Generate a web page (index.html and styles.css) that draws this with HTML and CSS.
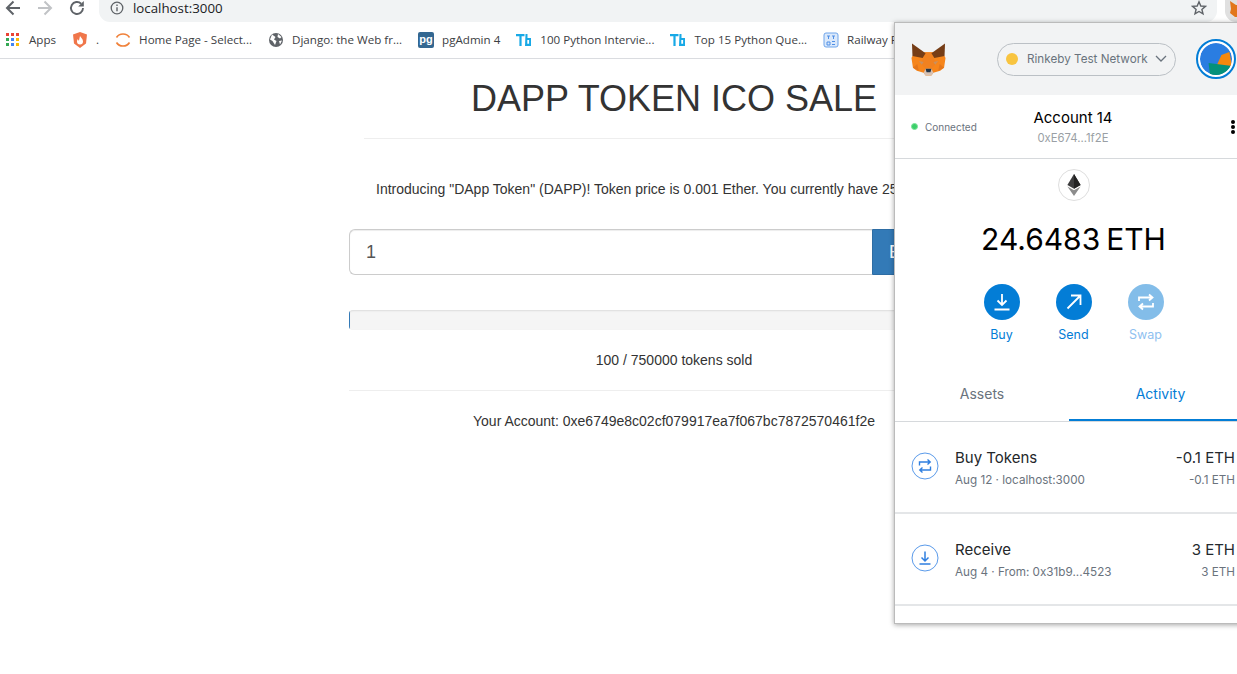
FILE: index.html
```html
<!DOCTYPE html>
<html>
<head>
    <title>DApp Token ICO</title>
    <link rel="stylesheet" href="styles.css">
</head>
<body>
    <div class="toolbar">
        <svg class="nav-icon" viewBox="0 0 16 16"><path d="M15 8H2.500M8.500 1.500 2 8l6.500 6.500" fill="none" stroke="#5f6368" stroke-width="2"/></svg>
        <svg class="nav-icon" viewBox="0 0 16 16"><path d="M1 8h12.500M7.500 1.500 14 8l-6.500 6.500" fill="none" stroke="#c1c3c6" stroke-width="2"/></svg>
        <svg class="nav-icon" viewBox="0 0 16 16"><path d="M14 8a6 6 0 1 1-1.800-4.300" fill="none" stroke="#5f6368" stroke-width="1.900"/><path d="M14.800 1v5.600H9.200z" fill="#5f6368"/></svg>
        <div class="address">
            <svg class="info-icon" viewBox="0 0 14 14"><circle cx="7" cy="7" r="5.800" fill="none" stroke="#5f6368" stroke-width="1.300"/><path d="M6.300 6.200h1.400v4H6.300zM6.300 3.600h1.400V5H6.300z" fill="#5f6368"/></svg>
            <span class="url">localhost:3000</span>
            <svg class="star-icon" viewBox="0 0 16 16"><path d="M8 1.800 9.800 6l4.600.400-3.500 3 1.100 4.500L8 11.500l-4 2.400 1.100-4.500-3.500-3L6.200 6z" fill="none" stroke="#5f6368" stroke-width="1.400"/></svg>
        </div>
        <div class="ext-btn">
            <svg viewBox="0 0 20 20"><path d="M2 1l6 4h4l6-4-1 8 1 4-5 4H7l-5-4 1-4z" fill="#e2761b"/></svg>
        </div>
    </div>

    <div class="bookmarks">
        <a class="bm bm-apps">
            <svg class="bm-icon grid-icon" viewBox="0 0 13 13">
                <path fill="#ea4335" d="M0 0h3v3H0zM5 0h3v3H5zM10 0h3v3h-3z"/>
                <path fill="#4285f4" d="M5 5h3v3H5z"/><path fill="#34a853" d="M0 5h3v3H0zM0 10h3v3H0z"/>
                <path fill="#fbbc05" d="M10 5h3v3h-3zM10 10h3v3h-3z"/><path fill="#4285f4" d="M5 10h3v3H5z"/>
            </svg>
            Apps
        </a>
        <a class="bm">
            <svg class="bm-icon" viewBox="0 0 16 16"><path d="M8 0l7 2.400-1 9L8 16l-6-4.600-1-9z" fill="#f0764a"/><path d="M8 4c1 2 3 3 3 5.500a3 3 0 0 1-6 0c0-1 .5-2 1-2.500 0 1 .5 1.500 1 1.500C7.500 7 7.500 5.500 8 4z" fill="#fff"/></svg>
            .
        </a>
        <a class="bm">
            <svg class="bm-icon" viewBox="0 0 16 16"><path d="M1.500 5.500C3 3 5.200 2 8 2s5 1 6.500 3.500" fill="none" stroke="#f0813a" stroke-width="1.600"/><path d="M1.500 10.500C3 13 5.200 14 8 14s5-1 6.500-3.500" fill="none" stroke="#f0813a" stroke-width="1.600"/></svg>
            Home Page - Select...
        </a>
        <a class="bm">
            <svg class="bm-icon" viewBox="0 0 16 16"><circle cx="8" cy="8" r="7" fill="#5f6368"/><path d="M4 2.500 7.500 5 6 7.500 8.500 9 7 13 4.500 9 2 7.500zM10 2l3.500 3-1.500 1.500L9.500 5zM11 9l3-.5-2 4z" fill="#fff"/></svg>
            Django: the Web fr...
        </a>
        <a class="bm">
            <span class="pg-icon">pg</span>
            pgAdmin 4
        </a>
        <a class="bm">
            <svg class="bm-icon" viewBox="0 0 16 16"><path d="M0 2h8.500v2.200H5.600V14H3.400V4.200H0zM9.500 2h2v4H15v8H9zM11.300 8v3.800h1.800V8z" fill="#18a9e6"/></svg>
            100 Python Intervie...
        </a>
        <a class="bm">
            <svg class="bm-icon" viewBox="0 0 16 16"><path d="M0 2h8.500v2.200H5.600V14H3.400V4.200H0zM9.500 2h2v4H15v8H9zM11.300 8v3.800h1.800V8z" fill="#18a9e6"/></svg>
            Top 15 Python Que...
        </a>
        <a class="bm">
            <svg class="bm-icon" viewBox="0 0 16 16"><rect x="1" y="1" width="14" height="14" rx="2" fill="#dbe9fb" stroke="#6fa5ea"/><path d="M4 4h3M5.500 4v3M9 4h3M10.500 4v3M4 10h3v3H4zM9 9.500h3M9 12.500h3" fill="none" stroke="#4f8fe6"/></svg>
            Railway Reservation
        </a>
    </div>

    <main class="page">
        <h1 class="title">DAPP TOKEN ICO SALE</h1>
        <hr class="title-rule">
        <p class="intro">Introducing "DApp Token" (DAPP)! Token price is 0.001 Ether. You currently have 25 DAPP now.</p>
        <form class="buy-form">
            <input class="amount" type="text" value="1">
            <button class="buy-btn" type="button">Buy Tokens</button>
        </form>
        <div class="progress"><div class="progress-bar"></div></div>
        <p class="sold">100 / 750000 tokens sold</p>
        <hr class="rule">
        <p class="account-line">Your Account: 0xe6749e8c02cf079917ea7f067bc7872570461f2e</p>
    </main>

    <div class="popup">
        <header class="mm-head">
            <svg class="fox" viewBox="0 0 36 33">
                <path d="M.5 15 1.500 13 14 9h8l12.500 4 1 2-1.500 10-4 3-7 2-2 3h-6l-2-3-7-2-4-3z" fill="#f6851b"/>
                <path d="M14 9h8l1 6 3 5-4 5h-8l-4-5 3-5z" fill="#f08120"/>
                <path d="M1 0l14 10-3 5-10.500-2z" fill="#763d16"/>
                <path d="M35 0 21 10l3 5 10.500-2z" fill="#763d16"/>
                <path d="M8 18l5 1-2 3zM28 18l-5 1 2 3z" fill="#c9905f"/>
                <path d="M13 30l2-4h6l2 4-2 3h-6z" fill="#d7c1b3"/>
                <path d="M15 26h6l-1 3.500h-4z" fill="#233447"/>
                <path d="M2 25l6 3-1.500-7zM34 25l-6 3 1.500-7z" fill="#e4761b"/>
            </svg>
            <div class="network">
                <span class="network-dot"></span>
                <span class="network-name">Rinkeby Test Network</span>
                <svg class="chevron" viewBox="0 0 12 8"><path d="M1 1l5 5 5-5" fill="none" stroke="#6a737d" stroke-width="1.300"/></svg>
            </div>
            <div class="identicon">
                <svg viewBox="0 0 32 32">
                    <circle cx="16" cy="16" r="16" fill="#2a7de1"/>
                    <path d="M29.400 9 32 23 16.600 22.700 21.400 12z" fill="#f4880e"/>
                    <path d="M8.600 20 32 23 28 32H10z" fill="#04917a"/>
                </svg>
            </div>
        </header>

        <section class="account-bar">
            <div class="connected"><span class="connected-dot"></span>Connected</div>
            <div class="account-info">
                <div class="account-name">Account 14</div>
                <div class="account-addr">0xE674...1f2E</div>
            </div>
            <div class="kebab"><i></i><i></i><i></i></div>
        </section>

        <section class="balance">
            <div class="eth-logo">
                <svg viewBox="0 0 12 20"><path d="M6 0 0 10l6 3.500 6-3.500z" fill="#3c3c3d"/><path d="M6 0v13.500l6-3.500z" fill="#222"/><path d="M0 11.300 6 20l6-8.700-6 3.500z" fill="#8c8c8c"/></svg>
            </div>
            <div class="amount-eth">24.6483<span>ETH</span></div>
            <div class="actions">
                <div class="action">
                    <span class="action-circle"><svg viewBox="0 0 20 20"><path d="M10 2v11M5.500 8.500 10 13l4.500-4.500M2.500 17.500h15" fill="none" stroke="#fff" stroke-width="1.800"/></svg></span>
                    Buy
                </div>
                <div class="action">
                    <span class="action-circle"><svg viewBox="0 0 20 20"><path d="M3.500 16.500 16 4M7 3.500h9.500V13" fill="none" stroke="#fff" stroke-width="1.800"/></svg></span>
                    Send
                </div>
                <div class="action action-off">
                    <span class="action-circle"><svg viewBox="0 0 20 20"><path d="M3 9V5.500h13M13 2.500l3.500 3-3.500 3M17 11v3.500H4M7 11.500l-3.500 3 3.500 3" fill="none" stroke="#fff" stroke-width="1.800"/></svg></span>
                    Swap
                </div>
            </div>
        </section>

        <nav class="tabs">
            <div class="tab">Assets</div>
            <div class="tab tab-active">Activity</div>
        </nav>

        <div class="tx">
            <span class="tx-icon"><svg viewBox="0 0 28 28"><circle cx="14" cy="14" r="13" fill="none" stroke="#5b9bea"/><path d="M8.500 13.500v-3.500h10.500M16.500 7.500l2.700 2.500-2.700 2.500M19.500 14.500V18H9M11.500 15.500 8.800 18l2.700 2.500" fill="none" stroke="#2f7fe0" stroke-width="1.400"/></svg></span>
            <div class="tx-main">
                <div class="tx-title">Buy Tokens</div>
                <div class="tx-sub">Aug 12 · localhost:3000</div>
            </div>
            <div class="tx-vals">
                <div class="tx-val">-0.1 ETH</div>
                <div class="tx-fiat">-0.1 ETH</div>
            </div>
        </div>
        <div class="tx">
            <span class="tx-icon"><svg viewBox="0 0 28 28"><circle cx="14" cy="14" r="13" fill="none" stroke="#5b9bea"/><path d="M14 7.500v9M10.500 13.500l3.500 3.500 3.500-3.500M8.500 20h11" fill="none" stroke="#2f7fe0" stroke-width="1.500"/></svg></span>
            <div class="tx-main">
                <div class="tx-title">Receive</div>
                <div class="tx-sub">Aug 4 · From: 0x31b9...4523</div>
            </div>
            <div class="tx-vals">
                <div class="tx-val">3 ETH</div>
                <div class="tx-fiat">3 ETH</div>
            </div>
        </div>
    </div>
</body>
</html>
```

FILE: styles.css
```css
html, body {
    height: 100%;
}

body {
    margin: 0;
    background: #fff;
    font-family: 'Liberation Sans', Arial, sans-serif;
    font-size: 14px;
    color: #333;
    overflow: hidden;
    position: relative;
}

/* browser chrome */
.toolbar {
    height: 22px;
    display: flex;
    align-items: flex-start;
    background: #fff;
}

.nav-icon {
    width: 16px;
    height: 16px;
    margin-left: 5px;
    flex: none;
}

.nav-icon + .nav-icon {
    margin-left: 16px;
}

.address {
    flex: 1;
    height: 22px;
    margin-left: 14px;
    padding: 0 10px 0 11px;
    display: flex;
    align-items: flex-start;
    background: #f1f3f4;
    border-radius: 0 0 11px 11px;
}

.info-icon {
    width: 14px;
    height: 14px;
    margin-top: 1px;
    flex: none;
}

.url {
    margin-left: 9px;
    font-family: 'Open Sans', sans-serif;
    font-size: 13.3px;
    line-height: 16px;
    color: #202124;
}

.star-icon {
    width: 16px;
    height: 16px;
    margin-left: auto;
}

.ext-btn {
    width: 22px;
    height: 22px;
    margin-left: 8px;
    margin-right: -10px;
    background: #e0e0e0;
    border-radius: 0 0 11px 11px;
    overflow: hidden;
}

.ext-btn svg {
    display: block;
    width: 20px;
    margin-left: 3px;
}

.bookmarks {
    height: 36px;
    display: flex;
    align-items: center;
    gap: 16px;
    padding-left: 6px;
    border-bottom: 1px solid #dadce0;
    white-space: nowrap;
    overflow: hidden;
    font-family: 'Open Sans', sans-serif;
    font-size: 11.6px;
    line-height: 14px;
    color: #3c4043;
}

.bm {
    display: flex;
    align-items: center;
    flex: none;
    margin-top: -1px;
}

.bm-icon {
    width: 16px;
    height: 16px;
    margin-right: 8px;
    flex: none;
}

.grid-icon {
    width: 13px;
    height: 13px;
    margin-right: 10px;
}

.pg-icon {
    width: 16px;
    height: 16px;
    margin-right: 8px;
    background: #336791;
    border-radius: 2px;
    color: #fff;
    font-family: 'Liberation Sans', sans-serif;
    font-weight: bold;
    font-size: 11px;
    line-height: 14px;
    text-align: center;
}

/* dapp page */
.page {
    width: 650px;
    margin-left: 349px;
    text-align: center;
}

.title {
    margin: 20px 0 0;
    font-size: 36px;
    font-weight: 500;
    line-height: 40px;
    color: #333;
}

.title-rule {
    margin: 19px 0 0 15px;
    width: 620px;
}

hr {
    border: 0;
    border-top: 1px solid #eee;
}

.intro {
    margin: 40px 0 0;
    line-height: 20px;
}

.buy-form {
    display: flex;
    margin-top: 30px;
}

.amount {
    flex: 1;
    height: 46px;
    box-sizing: border-box;
    padding: 10px 16px;
    border: 1px solid #ccc;
    border-right: 0;
    border-radius: 6px 0 0 6px;
    box-shadow: inset 0 1px 1px rgba(0,0,0,0.075);
    font-family: 'Liberation Sans', sans-serif;
    font-size: 18px;
    color: #555;
}

.buy-btn {
    width: 127px;
    height: 46px;
    padding: 10px 16px;
    background: #337ab7;
    border: 1px solid #2e6da4;
    color: #fff;
    font-family: 'Liberation Sans', sans-serif;
    font-size: 18px;
    text-align: left;
    border-radius: 0 6px 6px 0;
}

.progress {
    height: 20px;
    margin-top: 35px;
    background: #f5f5f5;
    border-radius: 4px;
    box-shadow: inset 0 1px 2px rgba(0,0,0,0.1);
    overflow: hidden;
}

.progress-bar {
    width: 1px;
    height: 20px;
    background: #337ab7;
}

.sold {
    margin: 20px 0 0;
    line-height: 20px;
}

.rule {
    margin: 20px 0 0;
}

.account-line {
    margin: 20px 0 0;
    line-height: 20px;
}

/* metamask popup */
.popup {
    position: absolute;
    left: 894px;
    top: 22px;
    width: 357px;
    height: 600px;
    background: #fff;
    border: 1px solid #bbb;
    box-shadow: 0 1px 5px rgba(0,0,0,0.35);
    font-family: Inter, sans-serif;
    color: #24292e;
}

.mm-head {
    height: 72px;
    padding: 0 16px;
    display: flex;
    align-items: center;
    background: #f2f3f4;
}

.fox {
    width: 35px;
    height: 33px;
    flex: none;
}

.network {
    width: 179px;
    height: 33px;
    box-sizing: border-box;
    margin-left: 51px;
    padding: 0 8px;
    display: flex;
    align-items: center;
    border: 1px solid #bbc0c5;
    border-radius: 17px;
    font-size: 11.7px;
    color: #6a737d;
}

.network-dot {
    width: 12px;
    height: 12px;
    border-radius: 50%;
    background: #f8c440;
    flex: none;
}

.network-name {
    margin-left: 9px;
    white-space: nowrap;
}

.chevron {
    width: 12px;
    height: 8px;
    margin-left: auto;
}

.identicon {
    width: 32px;
    height: 32px;
    margin-left: 20px;
    padding: 2px;
    border: 2px solid #037dd6;
    border-radius: 50%;
    background: #fff;
    flex: none;
}

.identicon svg {
    display: block;
    width: 32px;
    height: 32px;
    border-radius: 50%;
}

.account-bar {
    height: 63px;
    padding: 0 17px 0 16px;
    display: grid;
    grid-template-columns: 1fr auto 1fr;
    align-items: center;
    border-bottom: 1px solid #d6d9dc;
}

.connected {
    display: flex;
    align-items: center;
    font-size: 10px;
    color: #6a737d;
}

.connected-dot {
    width: 5px;
    height: 5px;
    margin-right: 7px;
    border: 1px solid #7de39a;
    background: #3ccf6a;
    border-radius: 50%;
}

.account-info {
    padding-top: 1px;
    text-align: center;
}

.account-name {
    font-size: 15px;
    line-height: 20px;
    color: #000;
}

.account-addr {
    margin-top: 3px;
    font-size: 11.3px;
    line-height: 15px;
    color: #9a9fa5;
}

.kebab {
    justify-self: end;
    display: flex;
    flex-direction: column;
    gap: 1px;
}

.kebab i {
    width: 4px;
    height: 4px;
    background: #000;
    border-radius: 50%;
}

.balance {
    display: flex;
    flex-direction: column;
    align-items: center;
}

.eth-logo {
    width: 30px;
    height: 30px;
    margin-top: 10px;
    display: flex;
    align-items: center;
    justify-content: center;
    border: 1px solid #dedede;
    border-radius: 50%;
}

.eth-logo svg {
    width: 14px;
    height: 22px;
}

.amount-eth {
    margin-top: 19px;
    font-size: 30px;
    line-height: 38px;
    color: #000;
    white-space: nowrap;
}

.amount-eth span {
    margin-left: 6px;
}

.actions {
    margin-top: 26px;
    display: flex;
    gap: 36px;
}

.action {
    width: 36px;
    display: flex;
    flex-direction: column;
    align-items: center;
    font-size: 12.5px;
    line-height: 16px;
    color: #037dd6;
}

.action-circle {
    width: 36px;
    height: 36px;
    margin-bottom: 7px;
    display: flex;
    align-items: center;
    justify-content: center;
    background: #037dd6;
    border-radius: 50%;
}

.action-circle svg {
    width: 20px;
    height: 20px;
}

.action-off {
    color: #8fc1f0;
}

.action-off .action-circle {
    background: #83bde9;
}

.tabs {
    height: 52px;
    margin-top: 26px;
    display: grid;
    grid-template-columns: 174px 183px;
    border-bottom: 1px solid #d6d9dc;
}

.tab {
    display: flex;
    align-items: center;
    justify-content: center;
    font-size: 14px;
    color: #6a737d;
    box-sizing: border-box;
    padding-bottom: 3px;
}

.tab-active {
    padding-bottom: 1px;
    color: #037dd6;
    border-bottom: 2px solid #037dd6;
}

.tx {
    height: 88px;
    padding: 2px 17px 0 0;
    display: flex;
    align-items: center;
    border-bottom: 2px solid #e4e6e8;
}

.tx-icon {
    width: 28px;
    height: 28px;
    margin: 0 0 4px 16px;
    flex: none;
}

.tx-icon svg {
    display: block;
    width: 28px;
    height: 28px;
}

.tx-main {
    margin-left: 16px;
    flex: 1;
}

.tx-title {
    font-size: 15px;
    line-height: 20px;
    color: #24272a;
}

.tx-sub {
    margin-top: 4px;
    font-size: 11.7px;
    line-height: 16px;
    color: #6a737d;
}

.tx-vals {
    text-align: right;
}

.tx-val {
    font-size: 15px;
    line-height: 20px;
}

.tx-fiat {
    margin-top: 4px;
    font-size: 11.7px;
    line-height: 16px;
    color: #6a737d;
}
```
